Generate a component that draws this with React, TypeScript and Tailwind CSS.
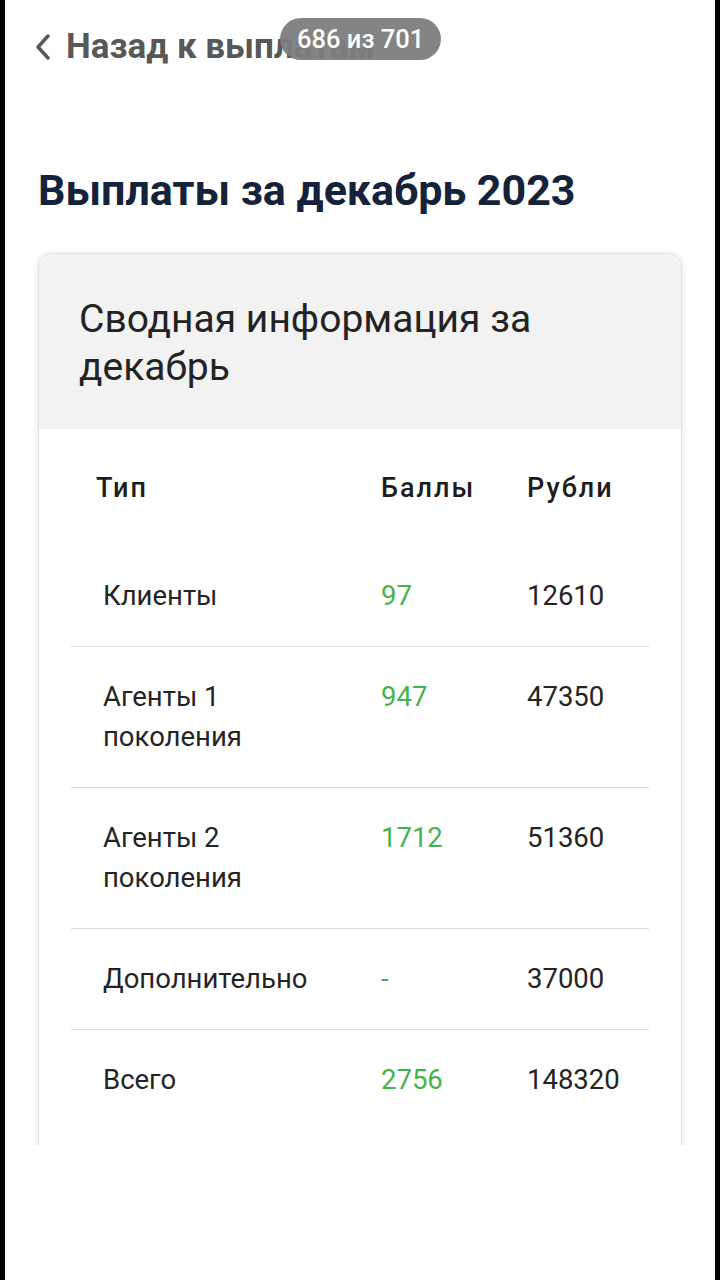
import React from 'react';

const rows = [
  { type: ['Клиенты'], points: '97', rub: '12610' },
  { type: ['Агенты 1', 'поколения'], points: '947', rub: '47350' },
  { type: ['Агенты 2', 'поколения'], points: '1712', rub: '51360' },
  { type: ['Дополнительно'], points: '-', rub: '37000' },
  { type: ['Всего'], points: '2756', rub: '148320' },
];

const App: React.FC = () => {
  return (
    <div className="flex min-h-screen bg-black px-[5px]" style={{ fontFamily: 'Roboto, "Noto Sans", sans-serif' }}>
      <div className="relative h-[1280px] w-full overflow-hidden bg-white">
        {/* back link */}
        <div className="flex h-[92px] items-center pl-[28px] pt-[2px] text-[35px] font-bold text-[#585858]">
          <svg width="20" height="30" viewBox="0 0 20 30" className="mr-[13px]">
            <path d="M15 4 L5 15 L15 26" fill="none" stroke="#585858" strokeWidth="3.5" strokeLinecap="round" strokeLinejoin="round" />
          </svg>
          <span>Назад к выплатам</span>
        </div>
        <div className="absolute left-[275px] top-[18px] flex h-[42px] items-center rounded-full bg-[#7d7d7d]/95 px-[17px] text-[25.5px] font-medium text-white">
          686 из 701
        </div>

        {/* title */}
        <h1 className="mt-[70px] pl-[33px] text-[43px] font-bold leading-[56px] text-[#15233a]">
          Выплаты за декабрь 2023
        </h1>

        {/* card */}
        <div className="mt-[25px] h-[902px] overflow-hidden px-[33px] pt-[10px]">
          <div className="h-[1000px] rounded-[14px] border border-[#e2e2e2] bg-white shadow-[0_1px_6px_rgba(0,0,0,0.12)]">
            <div className="h-[175px] rounded-t-[14px] bg-[#f2f2f2] px-[40px] pt-[41px] text-[39px] leading-[48px] text-[#232323]">
              Сводная информация за декабрь
            </div>
            <div className="px-[32px]">
              <div className="flex pt-[39px] pb-[38px] text-[27px] font-medium leading-[40px] tracking-[2px] text-[#1d1d1d]">
                <div className="w-[310px] pl-[25px]">Тип</div>
                <div className="w-[146px]">Баллы</div>
                <div>Рубли</div>
              </div>
              {rows.map((row, i) => (
                <div
                  key={i}
                  className={
                    'flex py-[30px] text-[27.5px] leading-[40px] text-[#242424] ' +
                    (i < rows.length - 1 ? 'border-b border-[#dcdcdc]' : '')
                  }
                >
                  <div className="w-[310px] pl-[32px]">
                    {row.type.map((t, j) => (
                      <div key={j}>{t}</div>
                    ))}
                  </div>
                  <div className="w-[146px] text-[#45b34c]">{row.points}</div>
                  <div>{row.rub}</div>
                </div>
              ))}
            </div>
          </div>
        </div>
      </div>
    </div>
  );
};

export default App;
